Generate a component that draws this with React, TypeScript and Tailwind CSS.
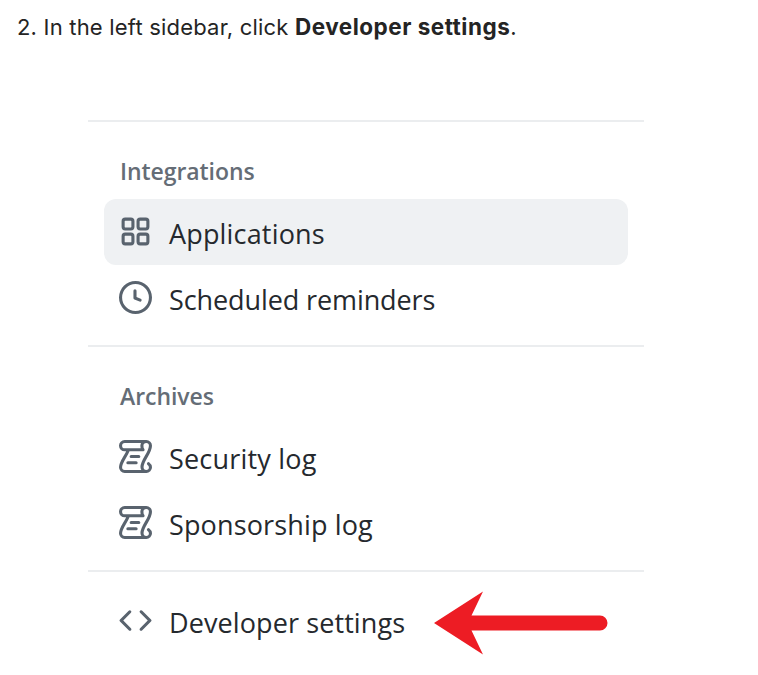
import type { ReactNode } from 'react';

type IconName = 'clock' | 'log' | 'code' | 'apps';

const clockPath = 'M8 0a8 8 0 1 1 0 16A8 8 0 0 1 8 0ZM1.5 8a6.5 6.5 0 1 0 13 0 6.5 6.5 0 0 0-13 0Zm7-3.25v2.992l2.028.812a.75.75 0 0 1-.557 1.392l-2.5-1A.751.751 0 0 1 7 8.25v-3.5a.75.75 0 0 1 1.5 0Z';
const codePath = 'm11.28 3.22 4.25 4.25a.75.75 0 0 1 0 1.06l-4.25 4.25a.749.749 0 0 1-1.275-.326.749.749 0 0 1 .215-.734L13.94 8l-3.72-3.72a.749.749 0 0 1 .326-1.275.749.749 0 0 1 .734.215Zm-6.56 0a.751.751 0 0 1 1.042.018.751.751 0 0 1 .018 1.042L2.06 8l3.72 3.72a.749.749 0 0 1-.326 1.275.749.749 0 0 1-.734-.215L.47 8.53a.75.75 0 0 1 0-1.06Z';

function Icon({ name }: { name: IconName }) {
  return (
    <svg viewBox="0 0 16 16" className="-mt-px size-[33px] shrink-0 overflow-visible text-[#59636e]" fill="currentColor">
      {name === 'apps' && (
        <g fill="none" stroke="currentColor" strokeWidth="1.5">
          <rect x="2" y="2" width="4.75" height="4.75" rx="1" />
          <rect x="9.25" y="2" width="4.75" height="4.75" rx="1" />
          <rect x="2" y="9.25" width="4.75" height="4.75" rx="1" />
          <rect x="9.25" y="9.25" width="4.75" height="4.75" rx="1" />
        </g>
      )}
      {name === 'log' && (
        <path
          fill="none"
          stroke="currentColor"
          strokeWidth="1.5"
          strokeLinecap="round"
          strokeLinejoin="round"
          d="M2.75.75h10.5c1.1 0 2 .9 2 2 0 3.5-4.1 7-4.1 10.3 0 1.3.9 2.2 2.05 2.2s2.05-.9 2.05-2c0-.78-.35-1.3-.95-1.75M13.25 15.25H2.75c-1.1 0-2-.9-2-2 0-2.7 2.6-5.2 3.8-8.4M2.75.75c-1.1 0-2 .9-2 2s.9 2 2 2h8.9C11.2 4.2 11.1 3.5 11.1 2.75c0-1.1.9-2 2.15-2M5.9 8h3.7M4.3 11h4"
        />
      )}
      {name === 'clock' && <path d={clockPath} />}
      {name === 'code' && <path d={codePath} />}
    </svg>
  );
}

function Item({ icon, className = '', children }: { icon: IconName; className?: string; children: ReactNode }) {
  return (
    <li className={`mx-4 flex h-[66px] items-center rounded-[12px] pl-[15px] ${className}`}>
      <Icon name={icon} />
      {children}
    </li>
  );
}

function Heading({ children }: { children: ReactNode }) {
  return (
    <h2 className="h-[77.5px] pt-[33px] pl-8 text-[23px] leading-[32px] font-semibold tracking-[-0.06px] text-[#656d76]">
      {children}
    </h2>
  );
}

export default function App() {
  return (
    <main className="h-[675px] w-[758px] overflow-hidden bg-white font-['Open_Sans',sans-serif] text-[#25292e]">
      <p className="h-[119.5px] pt-[11px] pl-[17px] font-['Inter',sans-serif] text-[22px] leading-8 whitespace-nowrap text-[#242424]">
        <span className="tracking-[0.2px]">2. In the left sidebar, click </span>
        <strong className="text-[22.5px] font-bold tracking-[0.5px]">Developer settings</strong>.
      </p>
      <nav className="ml-[88px] w-[556px] text-[27px] whitespace-nowrap">
        <section className="h-[225px] border-t-2 border-[#ebedef]">
          <Heading>Integrations</Heading>
          <ul>
            <Item icon="apps" className="bg-[#eff1f3]"><span className="ml-[17px] pt-[5px] tracking-[0.17px]">Applications</span></Item>
            <Item icon="clock"><span className="ml-[17px] pt-[5px] tracking-[-0.1px]">Scheduled reminders</span></Item>
          </ul>
        </section>
        <section className="h-[225px] border-t-2 border-[#ebedef]">
          <Heading>Archives</Heading>
          <ul>
            <Item icon="log"><span className="ml-[17px] pt-[5px] tracking-[0.2px]">Security log</span></Item>
            <Item icon="log"><span className="ml-[17px] pt-[5px] tracking-[0.14px]">Sponsorship log</span></Item>
          </ul>
        </section>
        <section className="flex border-t-2 border-[#ebedef] pt-4">
          <ul>
            <Item icon="code"><span className="ml-[17px] w-[236px] pt-[5px] tracking-[0.1px]">Developer settings</span></Item>
          </ul>
          <svg viewBox="0 0 174 64" className="mt-[3.5px] ml-[13px] h-16 w-[174px] shrink-0" fill="#ed1c24">
            <path d="M0 32 49 .5 37.5 24.5H166a7.5 7.5 0 0 1 0 15H37.5L49 63.5Z" />
          </svg>
        </section>
      </nav>
    </main>
  );
}
